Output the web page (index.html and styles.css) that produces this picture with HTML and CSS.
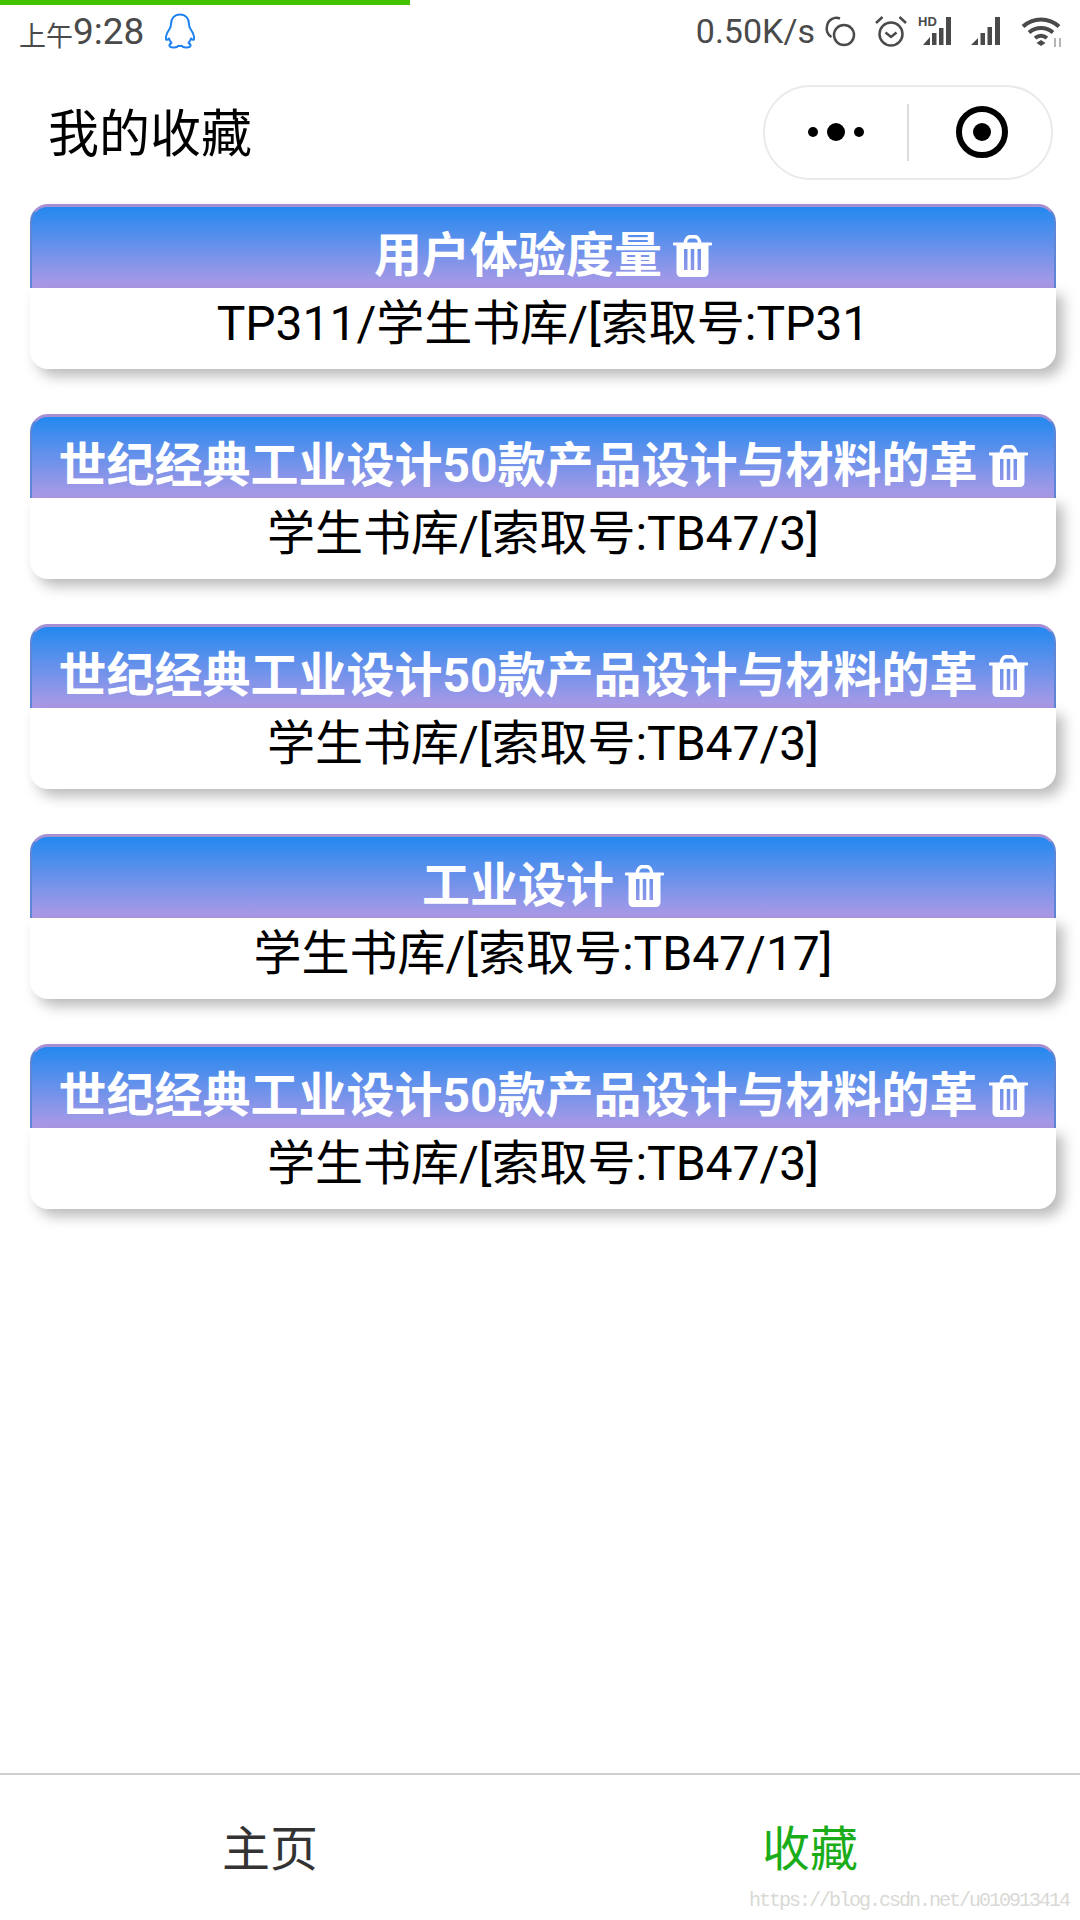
FILE: index.html
```html
<!DOCTYPE html>
<html lang="zh">
<head>
<meta charset="utf-8">
<title>我的收藏</title>
<link rel="stylesheet" href="styles.css">
</head>
<body>
<svg class="defs" width="0" height="0" aria-hidden="true">
  <symbol id="trash" viewBox="0 0 39 42">
    <path fill="#fff" fill-rule="evenodd" d="M1 7.500h9.500C11.500 2.500 14 0 17 0h5c3 0 5.500 2.500 6.500 7.500H38c.6 0 1 .4 1 1v1c0 .6-.4 1-1 1h-2.500V37c0 3-2 5-4.500 5H8c-2.500 0-4.500-2-4.500-5V10.500H1c-.6 0-1-.4-1-1v-1c0-.6.4-1 1-1ZM14 7.500h11C24.400 5 23.200 3.500 21.500 3.500h-4C15.800 3.500 14.600 5 14 7.500ZM11 14v21h3.500V14H11Zm6.750 0v21h3.500V14h-3.500ZM24.500 14v21H28V14h-3.500Z"/>
  </symbol>
</svg>
<div class="page">
  <div class="progress"></div>
  <header class="status">
    <div class="status-left">
      <span class="ampm">上午</span><span class="time">9:28</span>
      <svg class="qq" viewBox="0 0 32 36" width="32" height="36"><path fill="none" stroke="#1e82f0" stroke-width="2" stroke-linejoin="round" d="M16 1.500c-5.500 0-9 4-9 9.500 0 2-.500 3.500-1.500 5C3.500 19 1.500 23 2 26c.3 1.500 1.300 1 3-.500.500 2 1.500 3.500 2.500 4.500C5.500 31 4.700 32.500 6 33.700c2 1.300 6.500 1.100 8.500-1 1 .3 2 .3 3 0 2 2.100 6.500 2.300 8.500 1 1.300-1.200.500-2.700-1.500-3.700 1-1 2-2.500 2.500-4.500 1.700 1.500 2.700 2 3 .5.500-3-1.500-7-3.500-10-1-1.500-1.500-3-1.500-5 0-5.500-3.500-9.500-9-9.500Z"/></svg>
    </div>
    <div class="status-right">
      <span class="speed">0.50K/s</span>
      <svg class="ico-sync" viewBox="0 0 32 32" width="32" height="32"><circle cx="20" cy="20" r="10" fill="none" stroke="#4a4a4a" stroke-width="2.500"/><path fill="none" stroke="#4a4a4a" stroke-width="2.500" d="M7.500 22A9.500 9.500 0 0 1 3 11 9.500 9.500 0 0 1 16 3.500"/></svg>
      <svg class="ico-alarm" viewBox="0 0 34 34" width="34" height="34"><circle cx="17" cy="20" r="11.500" fill="none" stroke="#4a4a4a" stroke-width="2.500"/><path fill="none" stroke="#4a4a4a" stroke-width="2.500" d="M11.500 18.500l5.500 4.500 5.500-4.500M2 9l6.500-6M32 9l-6.500-6"/></svg>
      <svg class="ico-sig" viewBox="0 0 38 30" width="38" height="30"><text class="hd" x="0" y="10">HD</text><path fill="#4a4a4a" d="M5 29 12 21v8H5ZM14 17h4.500v12H14ZM21 12h4.500v17H21ZM28 1h5v28h-5Z"/></svg>
      <svg class="ico-sig2" viewBox="0 0 32 30" width="32" height="30"><path fill="#4a4a4a" d="M0 29 7 22v7H0ZM9.500 17H14v12H9.500ZM16.500 11H21v18h-4.500ZM24 1h5v28h-5Z"/></svg>
      <svg class="ico-wifi" viewBox="0 0 42 32" width="42" height="32"><path fill="none" stroke="#4a4a4a" stroke-width="4" d="M2 11.500C12 2 28 2 38 11.500M8 17.500c7-6 17-6 24 0M14 23c4-3 8-3 12 0"/><path fill="#4a4a4a" d="M20 25l4.500 3-4.500 3-4.500-3Z"/><path fill="#b5b5b5" d="M33 23h2v9h-2ZM38 23h2v9h-2Z"/></svg>
    </div>
  </header>
  <nav class="navbar">
    <h1 class="nav-title">我的收藏</h1>
    <div class="capsule">
      <div class="cap-part cap-part-left">
        <span class="dot"></span><span class="dot dot-big"></span><span class="dot"></span>
      </div>
      <div class="cap-divider"></div>
      <div class="cap-part cap-part-right">
        <span class="target"><span class="target-core"></span></span>
      </div>
    </div>
  </nav>
  <main class="list">
    <article class="card">
      <div class="card-head"><span class="card-title">用户体验度量</span><svg class="trash"><use href="#trash"/></svg></div>
      <div class="card-body">TP311/学生书库/[索取号:TP31</div>
    </article>
    <article class="card">
      <div class="card-head"><span class="card-title">世纪经典工业设计50款产品设计与材料的革</span><svg class="trash"><use href="#trash"/></svg></div>
      <div class="card-body">学生书库/[索取号:TB47/3]</div>
    </article>
    <article class="card">
      <div class="card-head"><span class="card-title">世纪经典工业设计50款产品设计与材料的革</span><svg class="trash"><use href="#trash"/></svg></div>
      <div class="card-body">学生书库/[索取号:TB47/3]</div>
    </article>
    <article class="card">
      <div class="card-head"><span class="card-title">工业设计</span><svg class="trash"><use href="#trash"/></svg></div>
      <div class="card-body">学生书库/[索取号:TB47/17]</div>
    </article>
    <article class="card">
      <div class="card-head"><span class="card-title">世纪经典工业设计50款产品设计与材料的革</span><svg class="trash"><use href="#trash"/></svg></div>
      <div class="card-body">学生书库/[索取号:TB47/3]</div>
    </article>
  </main>
  <footer class="tabbar">
    <div class="tab">主页</div>
    <div class="tab tab-active">收藏</div>
  </footer>
  <div class="watermark">https://blog.csdn.net/u010913414</div>
</div>
</body>
</html>
```
FILE: styles.css
```css
* { box-sizing: border-box; }
html, body { margin: 0; padding: 0; background: #fff; }
body { font-family: Roboto, "Noto Sans CJK SC", sans-serif; color: #000; }
.defs { position: absolute; }
.page { position: relative; width: 1080px; height: 1920px; display: flex; flex-direction: column; overflow: hidden; }
.progress { position: absolute; left: 0; top: 0; width: 410px; height: 5px; background: #44c100; }
.status { height: 62px; flex: none; display: flex; justify-content: space-between; align-items: center; padding: 0 17px 0 19px; color: #4a4a4a; }
.status-left, .status-right { display: flex; align-items: center; }
.ampm { font-size: 27px; padding-top: 6px; }
.time { font-size: 37px; }
.qq { margin-left: 20px; }
.speed { font-size: 34px; line-height: 40px; margin-right: 9px; }
.ico-alarm { margin-left: 18px; }
.ico-sig { margin-left: 10px; }
.ico-sig2 { margin-left: 15px; }
.ico-wifi { margin-left: 18px; }
.hd { font: 700 13px "Liberation Sans", sans-serif; fill: #4a4a4a; }
.navbar { height: 142px; flex: none; display: flex; align-items: center; justify-content: space-between; padding: 0 27px 2px 48px; }
.nav-title { margin: 0 0 4px; font-size: 51px; font-weight: 400; }
.capsule { width: 290px; height: 95px; border: 2px solid #eaeaea; border-radius: 48px; display: flex; align-items: center; }
.cap-part { display: flex; align-items: center; justify-content: center; gap: 9px; }
.cap-part-left { width: 142px; flex: none; }
.cap-part-right { flex: 1; padding-left: 4px; }
.cap-divider { width: 2px; height: 57px; background: #dddddd; flex: none; }
.dot { width: 10px; height: 10px; border-radius: 50%; background: #000; }
.dot-big { width: 18px; height: 18px; }
.target { width: 52px; height: 52px; border: 6px solid #000; border-radius: 50%; display: flex; align-items: center; justify-content: center; }
.target-core { width: 18px; height: 18px; border-radius: 50%; background: #000; }
.list { flex: 1; padding: 0 24px 0 30px; display: flex; flex-direction: column; gap: 45px; }
.card { height: 165px; display: flex; flex-direction: column; }
.card-head { height: 84px; flex: none; display: flex; align-items: center; justify-content: center; gap: 11px; padding-top: 17px; border-radius: 18px 18px 0 0; border-top: 3px solid #a78fd4; border-left: 2px solid #5f86d6; border-right: 2px solid #5f86d6; background: linear-gradient(180deg, #1e88f0 0%, #ae9ae6 100%); background-origin: border-box; color: #fff; }
.card-title { font-size: 48px; font-weight: 700; line-height: 70px; white-space: nowrap; }
.trash { width: 39px; height: 42px; flex: none; }
.card-body { flex: 1; display: flex; justify-content: center; font-size: 48px; font-weight: 400; line-height: 72px; white-space: nowrap; background: #fff; border-radius: 0 0 18px 18px; box-shadow: 7px 7px 14px rgba(0, 0, 0, 0.28); }
.tabbar { height: 147px; flex: none; display: flex; border-top: 2px solid #cfcfcf; background: #fff; }
.tab { flex: 1; display: flex; justify-content: center; padding-top: 42px; font-size: 48px; line-height: 66px; color: #333; }
.tab-active { color: #1aad19; }
.watermark { position: absolute; right: 11px; bottom: 8px; font-family: "Liberation Mono", monospace; font-size: 20px; letter-spacing: -2px; color: #d9d9d5; }
```
